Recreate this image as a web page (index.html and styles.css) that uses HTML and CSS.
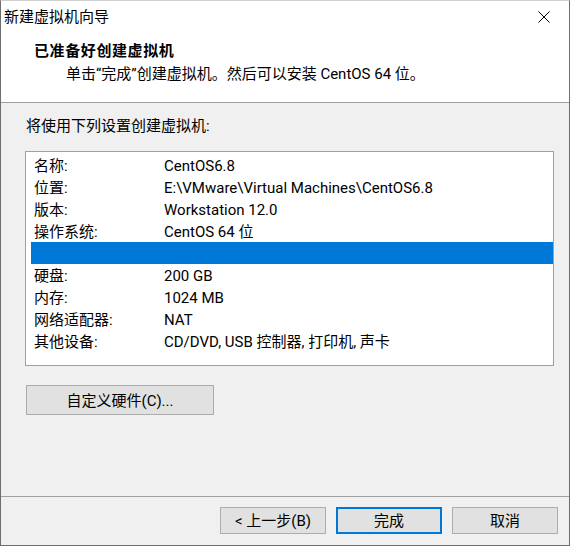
FILE: index.html
```html
<!DOCTYPE html>
<html>
<head>
<meta charset="utf-8">
<link rel="stylesheet" href="styles.css">
</head>
<body>
<div class="window">
  <div class="titlebar">
    <span class="title">新建虚拟机向导</span>
    <svg class="close" width="12" height="12" viewBox="0 0 12 12"><path d="M0.5 0.5 L11.5 11.5 M11.5 0.5 L0.5 11.5" stroke="#000" stroke-width="1" fill="none"/></svg>
  </div>
  <div class="header">
    <div class="h-title">已准备好创建虚拟机</div>
    <div class="h-sub">单击“完成”创建虚拟机。然后可以安装 CentOS 64 位。</div>
  </div>
  <div class="body">
    <div class="intro">将使用下列设置创建虚拟机:</div>
    <div class="list">
      <div class="row"><span class="k">名称:</span><span class="v">CentOS6.8</span></div>
      <div class="row"><span class="k">位置:</span><span class="v">E:\VMware\Virtual Machines\CentOS6.8</span></div>
      <div class="row"><span class="k">版本:</span><span class="v">Workstation 12.0</span></div>
      <div class="row"><span class="k">操作系统:</span><span class="v">CentOS 64 位</span></div>
      <div class="row sel"></div>
      <div class="row"><span class="k">硬盘:</span><span class="v">200 GB</span></div>
      <div class="row"><span class="k">内存:</span><span class="v">1024 MB</span></div>
      <div class="row"><span class="k">网络适配器:</span><span class="v">NAT</span></div>
      <div class="row"><span class="k">其他设备:</span><span class="v">CD/DVD, USB 控制器, 打印机, 声卡</span></div>
    </div>
    <div class="btn custom">自定义硬件(C)...</div>
  </div>
  <div class="footer">
    <div class="btn">&lt; 上一步(B)</div>
    <div class="btn primary">完成</div>
    <div class="btn">取消</div>
  </div>
</div>
</body>
</html>
```
FILE: styles.css
```css
html, body {
  margin: 0;
  padding: 0;
}
body {
  width: 570px;
  height: 546px;
  overflow: hidden;
  font-family: Roboto, "Noto Sans CJK SC", sans-serif;
  font-size: 15px;
  color: #000;
}
.window {
  box-sizing: border-box;
  width: 570px;
  height: 546px;
  border: 1px solid #6e6e6e;
  border-top-color: #d0d0d0;
  background: #f0f0f0;
  display: flex;
  flex-direction: column;
}
.titlebar {
  height: 30px;
  background: #fff;
  display: flex;
  align-items: center;
  justify-content: space-between;
  padding: 0 19px 0 3px;
}
.title {
  line-height: 20px;
  padding-top: 1px;
}
.close {
  display: block;
  margin-top: 1px;
}
.header {
  height: 72px;
  background: #fff;
  border-bottom: 1px solid #a0a0a0;
  padding: 10px 0 0 33px;
  box-sizing: border-box;
}
.h-title {
  font-weight: bold;
  line-height: 20px;
  letter-spacing: 0.6px;
}
.h-sub {
  line-height: 22px;
  padding-left: 32px;
  margin-top: 2px;
}
.body {
  flex: 1;
  padding: 13px 0 0 24px;
  border-bottom: 1px solid #a0a0a0;
}
.intro {
  line-height: 20px;
  padding-left: 1px;
}
.list {
  margin-top: 15px;
  width: 529px;
  height: 215px;
  box-sizing: border-box;
  border: 1px solid #a0a0a0;
  background: #fff;
  padding: 2px 0 0 5px;
}
.row {
  height: 22px;
  box-sizing: border-box;
  padding: 2px 0 0 3px;
  line-height: 20px;
  display: flex;
}
.row.sel {
  background: #0078d7;
}
.k {
  width: 130px;
  flex: none;
}
.btn {
  box-sizing: border-box;
  border: 1px solid #adadad;
  background: #e1e1e1;
  display: flex;
  align-items: center;
  justify-content: center;
  line-height: 20px;
  padding-top: 1px;
}
.custom {
  margin-top: 19px;
  margin-left: 1px;
  width: 188px;
  height: 30px;
}
.footer {
  height: 48px;
  display: flex;
  justify-content: flex-end;
  gap: 10px;
  padding: 10px 11px 0 0;
  box-sizing: border-box;
}
.footer .btn {
  width: 106px;
  height: 27px;
}
.footer .btn.primary {
  border: 2px solid #0078d7;
}
```
